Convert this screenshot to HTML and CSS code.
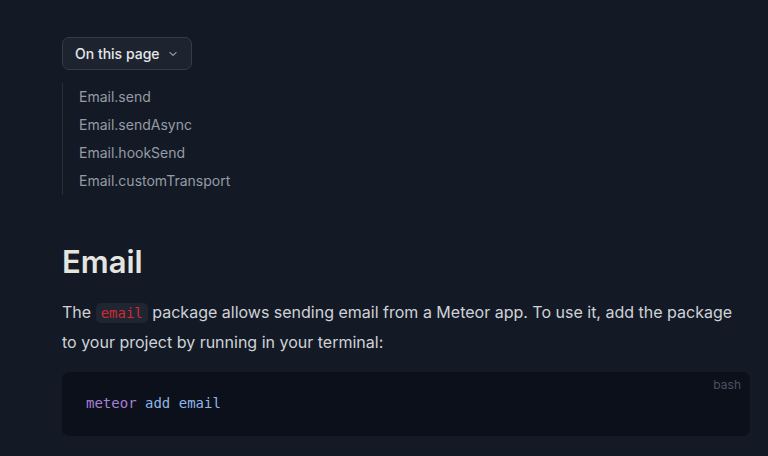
FILE: index.html
```html
<!DOCTYPE html>
<html lang="en">
<head>
<meta charset="utf-8">
<link rel="stylesheet" href="styles.css">
</head>
<body>
<main class="page">
  <nav class="toc">
    <button class="toc-toggle">On this page
      <svg class="chev" width="12" height="12" viewBox="0 0 24 24" fill="none" stroke="currentColor" stroke-width="2" stroke-linecap="round" stroke-linejoin="round"><path d="M6 9l6 6 6-6"/></svg>
    </button>
    <ul class="toc-list">
      <li>Email.send</li>
      <li>Email.sendAsync</li>
      <li>Email.hookSend</li>
      <li>Email.customTransport</li>
    </ul>
  </nav>
  <h1 class="title">Email</h1>
  <p class="text">The <code class="inline">email</code> package allows sending email from a Meteor app. To use it, add the package to your project by running in your terminal:</p>
  <div class="codeblock">
    <span class="lang">bash</span>
    <pre class="code"><span class="fn">meteor</span> <span class="arg">add email</span></pre>
  </div>
</main>
</body>
</html>
```
FILE: styles.css
```css
html, body {
  margin: 0;
  padding: 0;
  background: #131a26;
}
body {
  font-family: Inter, "Noto Sans", sans-serif;
  color: #d1d5db;
}
.page {
  padding: 37px 18px 0 62px;
}
.toc-toggle {
  display: inline-flex;
  align-items: center;
  gap: 7px;
  height: 33px;
  padding: 0 12px;
  background: #1d2430;
  border: 1px solid #353c48;
  border-radius: 7px;
  color: #e5e7eb;
  font-family: Inter, sans-serif;
  font-size: 14px;
  font-weight: 500;
}
.chev {
  margin-top: 1px;
}
.toc-list {
  list-style: none;
  margin: 13px 0 0 0;
  padding: 0 0 0 16px;
  border-left: 1px solid #2a303b;
}
.toc-list li {
  font-size: 14px;
  line-height: 28px;
  color: #969ba5;
}
.title {
  margin: 43px 0 0 0;
  font-size: 31px;
  font-weight: 600;
  line-height: 48px;
  color: #e5e5e0;
}
.text {
  margin: 12px 0 0 0;
  font-size: 16px;
  line-height: 29px;
  color: #cfd2d7;
}
.inline {
  font-family: "DejaVu Sans Mono", monospace;
  font-size: 14px;
  color: #d02a35;
  background: #1f2631;
  border-radius: 5px;
  padding: 2px 5px;
}
.codeblock {
  position: relative;
  margin-top: 15px;
  background: #0b101b;
  border-radius: 7px;
  height: 64px;
}
.lang {
  position: absolute;
  top: 5px;
  right: 9px;
  font-size: 12px;
  color: #4b5260;
}
.code {
  margin: 0;
  padding: 21px 24px;
  font-family: "DejaVu Sans Mono", monospace;
  font-size: 14px;
  line-height: 20px;
}
.fn { color: #a87fd6; }
.arg { color: #8fb6e6; }
```
